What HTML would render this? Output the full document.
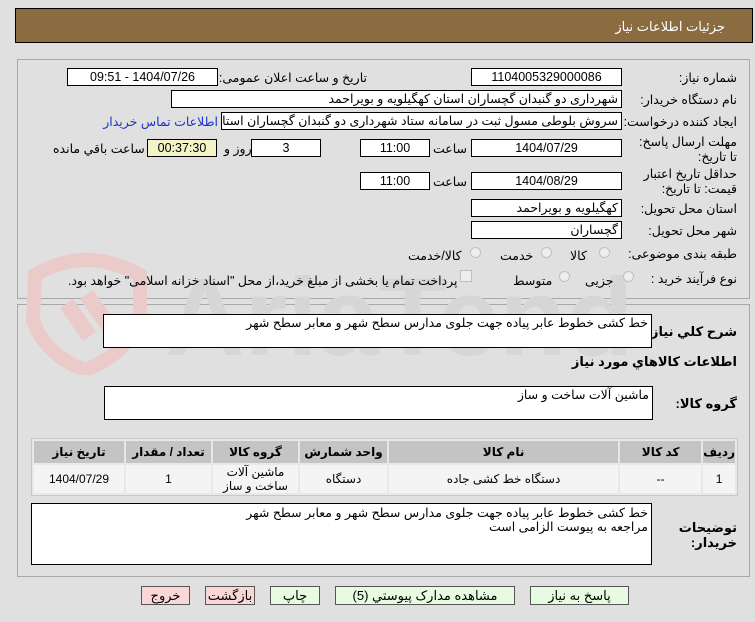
<!DOCTYPE html>
<html><head><meta charset="utf-8"><style>
*{box-sizing:border-box;margin:0;padding:0}
body{width:755px;height:622px;background:#e0e0e0;font-family:"Liberation Sans","DejaVu Sans",sans-serif;font-size:12.5px;color:#000;position:relative;overflow:hidden;direction:rtl}
.a{position:absolute;white-space:nowrap}
.box{position:absolute;background:#fff;border:1px solid #000;padding:0 3px;line-height:16px;white-space:nowrap;overflow:hidden}
.c{text-align:center}
.lbl{position:absolute;white-space:nowrap;text-align:right}
.panel{position:absolute;border:1px solid #a8a8a8;background:#e0e0e0}
table{border-collapse:separate;border-spacing:2px;position:absolute;background:#e8e8e8;border:1px solid #c8c8c8;font-size:12px}
th{background:#c4c4c4;height:22px;font-weight:bold}
td{background:#f4f4f4;text-align:center;height:28px;line-height:14px}
.btn{position:absolute;top:586px;height:19px;border:1px solid #555;text-align:center;line-height:17px;font-size:13px}
.radio{position:absolute;width:11px;height:11px;border-radius:50%;border:1px solid #c0c0c0;background:#eee}
</style></head><body>
<div class="a" style="left:15px;top:8px;width:738px;height:35px;background:#8b6b40;border:1px solid #000"></div>
<div class="a" style="right:30px;top:19px;color:#fff;font-size:13px">جزئیات اطلاعات نیاز</div>

<div class="panel" style="left:17px;top:59px;width:733px;height:240px"></div>
<div class="panel" style="left:17px;top:304px;width:733px;height:273px"></div>

<!-- watermark -->
<svg class="a" style="left:15px;top:245px" width="620" height="130" viewBox="0 0 620 130">
<path d="M20 30 Q70 0 125 30 L125 75 Q110 110 70 125 Q30 110 18 75 Z" fill="none" stroke="#ebcaca" stroke-width="14"/>
<rect x="55" y="55" width="16" height="40" fill="#ebcaca" transform="rotate(-35 63 75)"/>
<rect x="78" y="45" width="16" height="50" fill="#ebcaca" transform="rotate(-35 86 70)"/>
<text x="150" y="110" font-size="110" font-weight="bold" fill="#d6d6d6" font-family="Liberation Sans" direction="ltr">AriaTender.net</text>
</svg>

<div class="lbl" style="right:18px;top:70px">شماره نیاز:</div>
<div class="box c" style="left:471px;top:68px;width:151px;height:18px">1104005329000086</div>
<div class="lbl" style="right:388px;top:70px">تاریخ و ساعت اعلان عمومی:</div>
<div class="box c" style="left:67px;top:68px;width:151px;height:18px">1404/07/26 - 09:51</div>

<div class="lbl" style="right:18px;top:92px">نام دستگاه خریدار:</div>
<div class="box" style="left:171px;top:90px;width:451px;height:18px">شهرداری دو گنبدان گچساران استان کهگیلویه و بویراحمد</div>

<div class="lbl" style="right:18px;top:114px">ایجاد کننده درخواست:</div>
<div class="box" style="left:221px;top:112px;width:401px;height:18px">سروش بلوطی مسول ثبت در سامانه ستاد شهرداری دو گنبدان گچساران استان</div>
<div class="lbl" style="right:537px;top:114px;color:#1a33cc">اطلاعات تماس خریدار</div>

<div class="lbl" style="right:18px;top:135px;line-height:15px;white-space:normal;width:105px">مهلت ارسال پاسخ: تا تاریخ:</div>
<div class="box c" style="left:471px;top:139px;width:151px;height:18px">1404/07/29</div>
<div class="lbl" style="left:433px;top:141px">ساعت</div>
<div class="box c" style="left:360px;top:139px;width:70px;height:18px">11:00</div>
<div class="box c" style="left:251px;top:139px;width:70px;height:18px">3</div>
<div class="lbl" style="left:224px;top:141px">روز و</div>
<div class="box c" style="left:147px;top:139px;width:70px;height:18px;background:#f5f3c8">00:37:30</div>
<div class="lbl" style="left:53px;top:141px">ساعت باقي مانده</div>

<div class="lbl" style="right:18px;top:167px;line-height:15px;white-space:normal;width:100px">حداقل تاریخ اعتبار قیمت: تا تاریخ:</div>
<div class="box c" style="left:471px;top:172px;width:151px;height:18px">1404/08/29</div>
<div class="lbl" style="left:433px;top:174px">ساعت</div>
<div class="box c" style="left:360px;top:172px;width:70px;height:18px">11:00</div>

<div class="lbl" style="right:18px;top:201px">استان محل تحویل:</div>
<div class="box" style="left:471px;top:199px;width:151px;height:18px">کهگیلویه و بویراحمد</div>
<div class="lbl" style="right:18px;top:223px">شهر محل تحویل:</div>
<div class="box" style="left:471px;top:221px;width:151px;height:18px">گچساران</div>

<div class="lbl" style="right:18px;top:246px">طبقه بندی موضوعی:</div>
<div class="radio" style="left:599px;top:247px"></div><div class="lbl" style="left:570px;top:248px">کالا</div>
<div class="radio" style="left:541px;top:247px"></div><div class="lbl" style="left:500px;top:248px">خدمت</div>
<div class="radio" style="left:470px;top:247px"></div><div class="lbl" style="left:408px;top:248px">کالا/خدمت</div>

<div class="lbl" style="right:18px;top:271px">نوع فرآیند خرید :</div>
<div class="radio" style="left:623px;top:271px"></div><div class="lbl" style="left:585px;top:273px">جزیی</div>
<div class="radio" style="left:559px;top:271px"></div><div class="lbl" style="left:513px;top:273px">متوسط</div>
<div class="a" style="left:460px;top:270px;width:12px;height:12px;border:1px solid #c0c0c0;background:#eee"></div>
<div class="lbl" style="left:68px;top:273px">پرداخت تمام یا بخشی از مبلغ خرید،از محل "اسناد خزانه اسلامی" خواهد بود.</div>

<div class="lbl" style="right:18px;top:324px;font-weight:bold;font-size:13px">شرح کلي نیاز:</div>
<div class="box" style="left:103px;top:314px;width:549px;height:34px">خط کشی خطوط عابر پیاده جهت جلوی مدارس سطح شهر و معابر سطح شهر</div>
<div class="lbl" style="right:18px;top:354px;font-weight:bold;font-size:13px">اطلاعات کالاهاي مورد نیاز</div>
<div class="lbl" style="right:18px;top:396px;font-weight:bold;font-size:13px">گروه کالا:</div>
<div class="box" style="left:104px;top:386px;width:549px;height:34px">ماشین آلات ساخت و ساز</div>

<table style="left:31px;top:438px;width:707px">
<tr><th style="width:27px">ردیف</th><th style="width:81px">کد کالا</th><th>نام کالا</th><th style="width:87px">واحد شمارش</th><th style="width:85px">گروه کالا</th><th style="width:85px">تعداد / مقدار</th><th style="width:90px">تاریخ نیاز</th></tr>
<tr><td>1</td><td>--</td><td>دستگاه خط کشی جاده</td><td>دستگاه</td><td>ماشین آلات<br>ساخت و ساز</td><td>1</td><td>1404/07/29</td></tr>
</table>

<div class="lbl" style="right:18px;top:520px;font-weight:bold;font-size:13px;line-height:15px">توضیحات<br>خریدار:</div>
<div class="box" style="left:31px;top:503px;width:621px;height:62px;white-space:normal;line-height:14px;padding-top:2px">خط کشی خطوط عابر پیاده جهت جلوی مدارس سطح شهر و معابر سطح شهر<br>مراجعه به پیوست الزامی است</div>

<div class="btn" style="left:530px;width:99px;background:#e6fbe0">پاسخ به نیاز</div>
<div class="btn" style="left:335px;width:180px;background:#e6fbe0">مشاهده مدارک پیوستي (5)</div>
<div class="btn" style="left:270px;width:50px;background:#e6fbe0">چاپ</div>
<div class="btn" style="left:205px;width:50px;background:#fbd6d6">بازگشت</div>
<div class="btn" style="left:141px;width:49px;background:#fbd6d6">خروج</div>
</body></html>
